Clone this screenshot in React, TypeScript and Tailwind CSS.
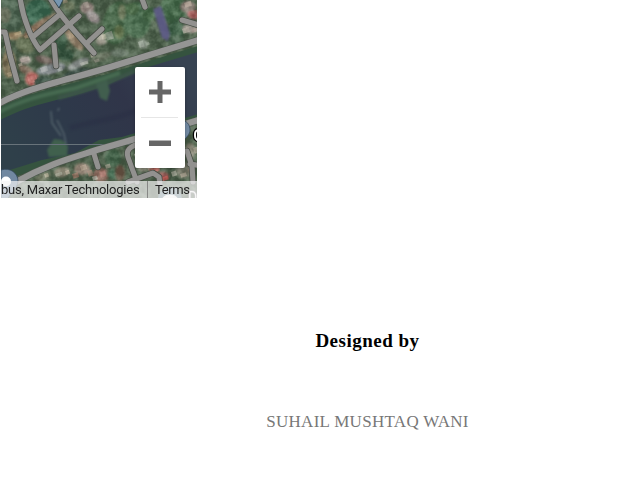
const roads = [
  "M20 -3 C23 20 32 40 40 50 L79 16",
  "M34 36 L59 15",
  "M49 -4 C59 15 72 28 94 53",
  "M87 43 L102 29",
  "M0 32 L5 32 L10 55 L17 81",
  "M54 45 L56 66",
  "M141 -4 L145 7",
  "M182 20 L202 26",
  "M94 154 L98 167",
  "M138 144 C126 148 126 153 129 160 L137 182",
  "M128 182 L153 173 L159 177 L160 184",
  "M187 151 L192 166 L193 182",
  "M190 164 L202 166",
];

const mainRoads = [
  "M-4 105 C30 86 70 80 120 64 L202 39",
  "M16 182 C50 163 72 158 100 149 C125 142 160 132 202 119",
];

// x, y, rx, ry, rotation, colour
const patches: [number, number, number, number, number, string][] = [
  [12, 12, 13, 20, 0, "#4a644f"],
  [5, 15, 6, 8, 0, "#6d7460"],
  [38, 13, 13, 14, 0, "#3a6b52"],
  [37, 27, 18, 4, -38, "#94765f"],
  [50, 20, 11, 4, -38, "#807059"],
  [59, 42, 8, 10, 0, "#3a5c45"],
  [74, 39, 5, 14, -38, "#98846c"],
  [69, 6, 6, 5, 0, "#6f7c60"],
  [87, 8, 7, 6, 0, "#968680"],
  [93, 17, 8, 5, 40, "#a49c9b"],
  [104, 37, 10, 6, -45, "#a8a597"],
  [117, 23, 14, 22, 12, "#486b4a"],
  [137, 20, 14, 18, 0, "#4b7050"],
  [122, 12, 4, 8, 0, "#727f5f"],
  [119, 32, 5, 7, 0, "#66794f"],
  [132, 9, 7, 6, 0, "#52754f"],
  [14, 36, 9, 4, 0, "#a08a69"],
  [25, 45, 10, 8, 30, "#647052"],
  [9, 64, 7, 14, 0, "#887b5d"],
  [25, 60, 6, 4, 0, "#b4aaa2"],
  [26, 70, 8, 4, 25, "#826e5d"],
  [32, 79, 7, 7, 0, "#bb6660"],
  [45, 60, 10, 4, 15, "#756760"],
  [66, 55, 8, 6, 0, "#35553f"],
  [51, 69, 15, 5, -12, "#858c90"],
  [78, 64, 12, 4, -25, "#929895"],
  [44, 82, 10, 6, 0, "#3a5144"],
  [77, 74, 15, 5, -15, "#384c44"],
  [101, 57, 11, 4, -18, "#707b67"],
  [119, 53, 9, 4, 0, "#738373"],
  [143, 44, 5, 5, 0, "#97a495"],
  [150, 14, 7, 7, 15, "#466c48"],
  [173, 9, 13, 15, 0, "#426948"],
  [176, 30, 8, 10, 0, "#3b6045"],
  [188, 7, 8, 6, 0, "#91837a"],
  [193, 15, 6, 4, 20, "#b26565"],
  [190, 29, 8, 4, 8, "#b3aaa2"],
  [176, 40, 9, 5, -15, "#48654d"],
  [74, 157, 9, 4, -20, "#40644d"],
  [43, 177, 8, 4, -20, "#747c65"],
  [62, 172, 8, 5, -10, "#8e8977"],
  [82, 169, 8, 6, 0, "#917f70"],
  [101, 175, 8, 7, 0, "#967063"],
  [113, 158, 8, 9, 0, "#426549"],
  [113, 174, 6, 5, 0, "#467055"],
  [120, 173, 5, 8, 0, "#6e5948"],
  [143, 163, 7, 9, 0, "#929281"],
  [154, 169, 5, 4, 0, "#b96b63"],
  [163, 176, 6, 4, 0, "#94524e"],
  [184, 170, 8, 8, 0, "#757766"],
  [190, 151, 5, 8, 0, "#8d8979"],
];

const roofs: [number, number, number, number, string][] = [
  [20, 59, 9, 4, "#d7c8be"], [27, 77, 9, 5, "#df8580"], [28, 80, 6, 4, "#df8b83"],
  [4, 46, 5, 7, "#ae9a79"], [3, 62, 4, 5, "#686249"], [7, 73, 5, 4, "#c0ac8c"],
  [14, 33, 7, 3, "#c1a87f"], [24, 36, 7, 3, "#bba687"], [18, 64, 4, 3, "#d0c4b2"],
  [40, 68, 7, 5, "#adafb1"], [47, 72, 9, 3, "#92969a"], [57, 68, 5, 4, "#acb0af"],
  [62, 0, 5, 4, "#ad9c83"], [83, 3, 5, 6, "#b1a59b"], [89, 16, 7, 6, "#b5aba8"],
  [101, 35, 6, 5, "#c8c1ac"], [105, 33, 7, 8, "#a8aaa0"], [68, 34, 5, 5, "#b39c7c"],
  [80, 63, 8, 3, "#c6c7be"], [90, 54, 4, 4, "#bcada0"], [94, 60, 5, 3, "#a8a497"],
  [138, 42, 5, 6, "#becabb"], [145, 43, 4, 3, "#9ba898"], [184, 3, 7, 5, "#c9b6a8"],
  [189, 12, 8, 6, "#a95c57"], [182, 29, 7, 5, "#d2cbbd"], [191, 29, 6, 4, "#b8a59b"],
  [44, 174, 4, 4, "#c7bda4"], [55, 174, 7, 3, "#bec0ae"], [65, 171, 4, 4, "#d0beaa"],
  [72, 174, 6, 5, "#b87f70"], [80, 166, 6, 5, "#cab5a1"], [87, 171, 5, 6, "#ab8574"],
  [92, 177, 5, 4, "#cad0c2"], [99, 172, 6, 6, "#c08177"], [105, 165, 5, 4, "#b1aa99"],
  [134, 154, 5, 6, "#c4bfae"], [141, 160, 5, 5, "#a96157"], [147, 167, 5, 3, "#d4baaa"],
  [154, 168, 5, 4, "#da7770"], [160, 178, 8, 4, "#e5635d"], [171, 172, 5, 5, "#c5c2b3"],
  [180, 174, 6, 4, "#bdaf9c"], [188, 169, 5, 5, "#aa7c6e"], [193, 148, 4, 6, "#bcb09f"],
];

function SatelliteMap() {
  return (
    <svg className="block h-full w-full" viewBox="1 0 196 198" aria-label="Satellite map">
      <defs>
        <filter id="soft" x="-20%" y="-20%" width="140%" height="140%" colorInterpolationFilters="sRGB">
          <feGaussianBlur stdDeviation="1.3" />
        </filter>
        <filter id="roof" colorInterpolationFilters="sRGB">
          <feGaussianBlur stdDeviation=".65" />
        </filter>
        <filter id="terrain" x="0" y="0" width="100%" height="100%" colorInterpolationFilters="sRGB">
          <feTurbulence type="fractalNoise" baseFrequency=".12" numOctaves="3" seed="8" />
          <feColorMatrix values="2.4 .1 0 0 -.86  2.4 .1 0 0 -.84  2.3 .1 0 0 -.82  0 0 0 0 .16" />
        </filter>
        <linearGradient id="river" x1="0" y1=".7" x2="1" y2=".3">
          <stop stopColor="#2f404a" />
          <stop offset=".35" stopColor="#2e394a" />
          <stop offset=".65" stopColor="#303549" />
          <stop offset="1" stopColor="#374352" />
        </linearGradient>
      </defs>
      <rect width="198" height="198" fill="#4b6049" />
      <g filter="url(#soft)">
        {patches.map(([x, y, rx, ry, angle, color], i) => (
          <ellipse key={i} cx={x} cy={y} rx={rx} ry={ry} fill={color} transform={`rotate(${angle} ${x} ${y})`} />
        ))}
      </g>
      <g filter="url(#roof)" opacity=".65">
        {roofs.map(([x, y, w, h, color], i) => (
          <rect key={i} x={x} y={y} width={w} height={h} fill={color} transform={`rotate(-18 ${x} ${y})`} />
        ))}
      </g>
      <rect x="1" width="196" height="198" filter="url(#terrain)" />
      <path d="M153 9 L161 6 L165 18 L170 34 L168 41 L162 38Z" fill="#605b8d" opacity=".85" filter="url(#soft)" />
      <path d="M0 107 C35 89 85 82 120 70 L198 46 V121 L104 147 L60 160 L14 177 L0 172Z" fill="#35533f" filter="url(#roof)" />
      <path d="M0 120 C38 101 61 101 95 89 L107 85 L122 78 L145 68 L198 52 V114 L122 137 L99 140 L75 153 L42 160 L0 173Z" fill="url(#river)" filter="url(#roof)" />
      <g filter="url(#soft)">
        <path d="M-3 113 C25 98 48 94 76 88 L120 73" stroke="#476a51" strokeWidth="4" fill="none" />
        <path d="M58 98 L83 91 L105 84 L119 78 L138 70" stroke="#3c5449" strokeWidth="4" fill="none" />
        <path d="M96 84 L107 80 L110 91 L107 101 L100 98Z" fill="#415e4e" />
        <path d="M47 150 L54 139 L62 140 L68 146 L67 156 L49 157Z" fill="#40604d" />
        <path d="M51 111 L52 123 L61 136 M59 108 L58 111 M57 120 L64 134 L66 144" stroke="#64757a" strokeWidth="1.5" fill="none" opacity=".7" />
        <path d="M70 128 C98 120 128 117 143 107" stroke="#292d43" strokeWidth="5" fill="none" opacity=".4" />
      </g>
      <path d="M1 144.5 H136" stroke="#68737a" strokeWidth="1" />
      <g fill="none" strokeLinecap="round" strokeLinejoin="round">
        {roads.map((d) => <path key={d} d={d} stroke="#454b43" strokeWidth="6.5" />)}
        {mainRoads.map((d) => <path key={d} d={d} stroke="#4b554c" strokeWidth="7.3" />)}
        {roads.map((d) => <path key={d} d={d} stroke="#92918f" strokeWidth="5.1" />)}
        {mainRoads.map((d) => <path key={d} d={d} stroke="#959594" strokeWidth="6.1" />)}
      </g>
      <path d="M53 -1 L59 8 L64 -2Z" fill="#7796b0" stroke="#263943" strokeWidth=".8" />
      <g fill="#7188a0" stroke="#33495c" strokeWidth=".8">
        <path d="M1 170 C10 167 18 173 18 181 C18 188 10 193 6 202 L1 202Z" />
        <path d="M180 120 C187 120 190 125 190 130 C190 134 187 137 183 141 L177 139Z" />
      </g>
      <circle cx="6" cy="181.5" r="5" fill="#fff" />
      <text x="193.2" y="141" className="fill-white stroke-black stroke-[2.5px] font-['Roboto'] text-[16px] font-medium [paint-order:stroke]">C</text>
      <circle cx="170" cy="199" r="12" fill="#6c8790" />
      <path d="M162 199 C164 193 176 193 178 199Z" fill="#fff" />
      <text x="188" y="202" className="fill-white stroke-[#777] stroke-[2px] font-['Roboto'] text-[14px] [paint-order:stroke]">D</text>
    </svg>
  );
}

function ZoomControls() {
  return (
    <div className="absolute top-[67px] left-[134px] flex h-[101px] w-[50px] flex-col items-center rounded-[2px] bg-white pr-px shadow-[0_1px_3px_rgba(0,0,0,0.3)]">
      <button aria-label="Zoom in" className="grid h-[50px] w-full place-items-center">
        <svg className="size-[22px]" viewBox="0 0 22 22" fill="#666"><path d="M8.5 0h5v8.5H22v5h-8.5V22h-5v-8.5H0v-5h8.5z" /></svg>
      </button>
      <div className="h-px w-[37px] bg-[#e6e6e6]" />
      <button aria-label="Zoom out" className="grid h-[50px] w-full place-items-center">
        <svg className="h-[6px] w-[22px]" viewBox="0 0 22 6"><path d="M0 .5h22V6H0z" fill="#666" /></svg>
      </button>
    </div>
  );
}

export default function App() {
  return (
    <main className="h-[504px] overflow-hidden bg-white pl-px">
      <section className="relative h-[198px] w-[196px] overflow-hidden">
        <SatelliteMap />
        <ZoomControls />
        <div className="absolute bottom-0 left-0 flex h-[17px] w-full items-center bg-[#f5f5f5]/70 font-['Roboto',sans-serif] text-[13px] leading-[17px] tracking-[-0.22px] whitespace-nowrap text-[#222]">
          <span className="w-[146px]">bus, Maxar Technologies</span>
          <span className="h-full w-px bg-[#777]/80" />
          <span className="ml-[7px] tracking-[-0.4px]">Terms</span>
        </div>
      </section>
      <footer className="ml-[48px] flex w-[637px] flex-col items-center pt-[130px] font-['Liberation_Serif',serif]">
        <h3 className="text-[19px] leading-[26px] font-bold tracking-[0.5px] text-black">Designed by</h3>
        <p className="mt-[56px] text-[17px] leading-[24px] tracking-[0.3px] text-[#777]">SUHAIL MUSHTAQ WANI</p>
      </footer>
    </main>
  );
}
